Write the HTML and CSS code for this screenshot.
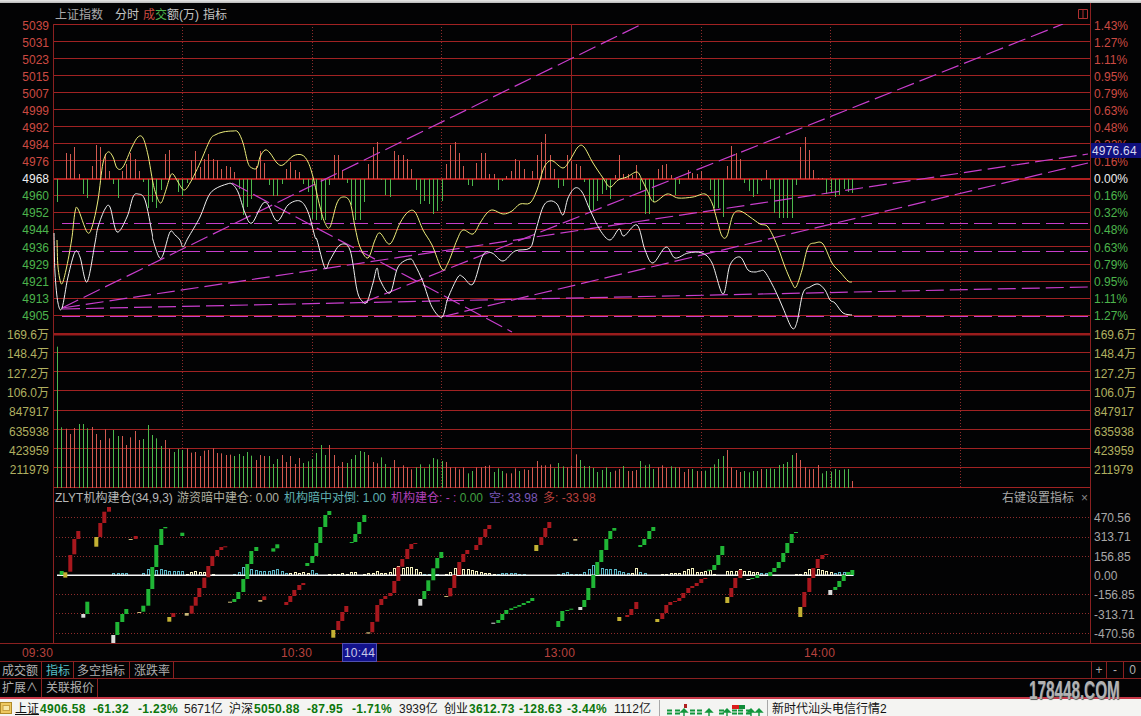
FILE: index.html
```html
<!DOCTYPE html>
<html lang="zh">
<head>
<meta charset="utf-8">
<title>上证指数 分时</title>
<link rel="stylesheet" href="styles.css">
</head>
<body>
<div class="screen">
  <div class="topstrip"></div>
  <div class="main">
    <div class="axis axis-left">
      <div class="ticks ticks-price">
        <span class="up">5039</span><span class="up">5031</span><span class="up">5023</span><span class="up">5015</span><span class="up">5007</span><span class="up">4999</span><span class="up">4992</span><span class="up">4984</span><span class="up">4976</span><span class="flat">4968</span><span class="down">4960</span><span class="down">4952</span><span class="down">4944</span><span class="down">4936</span><span class="down">4929</span><span class="down">4921</span><span class="down">4913</span><span class="down">4905</span>
      </div>
      <div class="ticks ticks-vol">
        <span>169.6万</span><span>148.4万</span><span>127.2万</span><span>106.0万</span><span>847917</span><span>635938</span><span>423959</span><span>211979</span>
      </div>
    </div>
    <div class="plot">
      <div class="plot-head">
        <span class="head-name">上证指数</span>
        <span class="head-item">分时</span>
        <span class="head-item"><i class="up">成</i><i class="down">交</i>额(万)</span>
        <span class="head-item">指标</span>
        <svg class="head-icon" width="10" height="10" viewBox="0 0 10 10"><path d="M.5.5h9v9h-9zM5 .5v9" fill="none" stroke="#b03030"/></svg>
      </div>
      <svg id="pane-price" class="pane pane-price" viewBox="53 24 1038 309" width="1038" height="309"></svg>
      <svg id="pane-vol" class="pane pane-vol" viewBox="53 333 1038 155" width="1038" height="155"></svg>
      <div class="ind">
        <svg id="pane-ind" class="pane pane-ind" viewBox="53 488 1038 155" width="1038" height="155"></svg>
        <div class="legend">
          <span class="leg leg-a">ZLYT机构建仓(34,9,3)</span>
          <span class="leg leg-b">游资暗中建仓: 0.00</span>
          <span class="leg leg-c">机构暗中对倒: 1.00</span>
          <span class="leg leg-d">机构建仓: - : <i class="leg-green">0.00</i></span>
          <span class="leg leg-e">空: 33.98</span>
          <span class="leg leg-f">多: -33.98</span>
          <span class="leg-right">右键设置指标<i class="leg-x">×</i></span>
        </div>
      </div>
    </div>
    <div class="axis axis-right">
      <div class="ticks ticks-price">
        <span class="up">1.43%</span><span class="up">1.27%</span><span class="up">1.11%</span><span class="up">0.95%</span><span class="up">0.79%</span><span class="up">0.63%</span><span class="up">0.48%</span><span class="up">0.32%</span><span class="up">0.16%</span><span class="flat">0.00%</span><span class="down">0.16%</span><span class="down">0.32%</span><span class="down">0.48%</span><span class="down">0.63%</span><span class="down">0.79%</span><span class="down">0.95%</span><span class="down">1.11%</span><span class="down">1.27%</span>
      </div>
      <div class="ticks ticks-vol">
        <span>169.6万</span><span>148.4万</span><span>127.2万</span><span>106.0万</span><span>847917</span><span>635938</span><span>423959</span><span>211979</span>
      </div>
      <div class="ticks ticks-ind">
        <span>470.56</span><span>313.71</span><span>156.85</span><span>0.00</span><span>-156.85</span><span>-313.71</span><span>-470.56</span>
      </div>
      <div class="last-price">4976.64</div>
    </div>
  </div>
  <div class="timebar">
    <span>09:30</span><span>10:30</span><span class="time-cur">10:44</span><span>13:00</span><span>14:00</span>
  </div>
  <div class="tabrow tabrow-a">
    <span class="tab tab-1">成交额</span>
    <span class="tab tab-2 tab-on">指标</span>
    <span class="tab tab-3">多空指标</span>
    <span class="tab tab-4">涨跌率</span>
    <div class="zoomer">
      <span class="zoom-btn zoom-1">+</span><span class="zoom-btn zoom-2">-</span><span class="zoom-btn zoom-3">0</span>
    </div>
  </div>
  <div class="tabrow tabrow-b">
    <span class="tab tab-1">扩展∧</span>
    <span class="tab tab-5">关联报价</span>
  </div>
  <div class="status">
    <svg class="st-icon" width="13" height="13" viewBox="0 0 13 13"><rect x=".5" y=".5" width="11" height="11" fill="#eec860" stroke="#b08a28"/><rect x="3" y="3.5" width="6.5" height="5" fill="#f8e8a8" stroke="#c8a040"/></svg>
    <span class="st-name st-link">上证</span><b class="st-num">4906.58</b><b class="st-num">-61.32</b><b class="st-num">-1.23%</b><span>5671亿</span>
    <span class="st-name">沪深</span><b class="st-num">5050.88</b><b class="st-num">-87.95</b><b class="st-num">-1.71%</b><span>3939亿</span>
    <span class="st-name">创业</span><b class="st-num">3612.73</b><b class="st-num">-128.63</b><b class="st-num">-3.44%</b><span>1112亿</span>
    <i class="st-sep"></i>
    <svg id="mini" class="st-mini" viewBox="660 697 107 19" width="107" height="19"></svg>
    <i class="st-sep"></i>
    <span class="st-news">新时代汕头电信行情2</span>
  </div>
  <div class="watermark">178448.COM</div>
</div>
<script src="chart.js"></script>
</body>
</html>
```
FILE: styles.css
```css
* { box-sizing: border-box; }
html, body { margin: 0; padding: 0; background: #000; }
body { font: 12px/1 "Liberation Sans", "Noto Sans CJK SC", sans-serif; color: #bbb; }
i { font-style: normal; }
.screen { position: relative; width: 1141px; height: 716px; overflow: hidden; background: #030304; }
.topstrip { height: 3px; background: linear-gradient(#e8e8e8, #b8b8b8); }
.main { display: flex; height: 640px; }
.axis { position: relative; flex: none; }
.axis-left { width: 53px; }
.axis-right { width: 50px; }
.ticks { display: grid; }
.ticks span { display: flex; align-items: center; white-space: nowrap; }
.ticks-price { grid-auto-rows: 17.09px; padding-top: 14px; }
.ticks-vol { grid-auto-rows: 19.3px; margin-top: 1px; color: #b0b060; }
.ticks-ind { grid-auto-rows: 19.35px; margin-top: 28.6px; color: #a8a8a8; }
.axis-left .ticks span { justify-content: flex-end; padding-right: 4px; }
.axis-right .ticks span { padding-left: 3px; }
.up { color: #cc4a42; }
.down { color: #4cb44c; }
.flat { color: #eee; }
.plot { width: 1038px; flex: none; display: flex; flex-direction: column; }
.plot-head { height: 21px; display: flex; align-items: center; padding: 2px 0 0 2px; border-right: 1px solid #8a2020; color: #c4c4c4; }
.head-name { margin-right: 12px; color: #aaa; }
.head-item { margin-right: 4px; }
.head-icon { margin-left: auto; margin-right: 2px; margin-top: -2px; }
.pane { display: block; flex: none; }
.ind { position: relative; height: 155px; }
.legend { position: absolute; inset: 0 0 auto 0; height: 19px; display: grid; grid-template-columns: 122px 107px 107px 98px 54px 1fr 89px; align-items: center; padding: 1px 0 0 2px; }
.leg { white-space: nowrap; }
.leg-a { color: #b8b8b8; }
.leg-b { color: #b0b0a0; }
.leg-c { color: #5fb0b0; }
.leg-d { color: #b040b8; }
.leg-green { color: #40a040; }
.leg-e { color: #7a58b8; }
.leg-f { color: #b8403c; }
.leg-right { color: #a8a8a8; white-space: nowrap; }
.leg-x { margin-left: 7px; color: #888; }
.timebar { display: grid; grid-template-columns: 259px 62px 201px 260px 1fr; align-items: center; height: 19px; padding-left: 22px; border-top: 1px solid #8a2020; border-bottom: 1px solid #8a2020; color: #b8423e; letter-spacing: .2px; }
.time-cur { width: 33px; height: 17px; display: flex; align-items: center; justify-content: center; background: #12128c; color: #c8c8e8; outline: 1px solid #5050b0; }
.tabrow { display: flex; align-items: stretch; }
.tabrow-a { height: 17px; border-bottom: 1px solid #8a2020; }
.tabrow-b { height: 18px; }
.tab { display: flex; align-items: center; padding: 1px 0 0 2px; border-right: 1px solid #8a2020; color: #b0b0b0; white-space: nowrap; }
.tabrow-b .tab { padding-top: 0; }
.tab-1 { width: 42px; }
.tab-2 { width: 32px; padding-left: 4px; }
.tab-3 { width: 56px; padding-left: 3px; }
.tab-4 { width: 44px; padding-left: 4px; }
.tab-5 { width: 56px; padding-left: 4px; }
.tab-on { color: #58c0c8; }
.zoomer { margin-left: auto; width: 50px; display: flex; border-left: 1px solid #8a2020; }
.zoom-btn { display: flex; align-items: center; justify-content: center; border-right: 1px solid #8a2020; color: #b0b0b0; }
.zoom-1 { width: 15px; }
.zoom-2 { width: 17px; }
.zoom-3 { flex: 1; border-right: 0; }
.status { display: grid; grid-template-columns: 15px 25px 53px 45px 46px 45px 25px 53px 45px 47px 45px 25px 50px 48px 47px 45px 1px 107px 1px 1fr; align-items: center; height: 20px; border-top: 2px solid #c83848; background: #f4f4f2; color: #1a1a1a; white-space: nowrap; }
.st-icon { margin-left: 0; }
.st-name { color: #111; }
.st-link { text-decoration: underline; }
.st-num { color: #0c760c; letter-spacing: .35px; }
.st-sep { height: 18px; width: 1px; background: #a8a8a8; }
.st-mini { display: block; }
.st-news { padding-left: 4px; color: #111; }
.last-price { position: absolute; left: 0; top: 140px; width: 50px; height: 15px; display: flex; align-items: center; padding-left: 1px; background: #10107e; color: #d8d8f0; letter-spacing: .2px; }
.watermark { position: absolute; left: 1029px; top: 678px; font: bold 25px/25px "Liberation Sans", sans-serif; color: #b2b2b2; text-shadow: 1px 1px 1px #555; white-space: nowrap; transform: scaleX(.61); transform-origin: left top; }
```
FILE: chart.js
```js
(function () {
  var NS = 'http://www.w3.org/2000/svg';
  function add(parent, tag, attrs) {
    var el = document.createElementNS(NS, tag);
    for (var k in attrs) el.setAttribute(k, attrs[k]);
    parent.appendChild(el);
    return el;
  }
  function X(n) { return Math.round(57 + 4.322 * n) + 0.5; }
  var GRID = '#a02222', DOT = '#8e2c2c', RED = '#d25a50', GREEN = '#4cb84c', MAG = '#c83ecc';

  var price = document.getElementById('pane-price');
  var vol = document.getElementById('pane-vol');
  var ind = document.getElementById('pane-ind');

  function hline(p, y, w, c, dash, x1, x2) {
    var a = { x1: x1 || 53, x2: x2 || 1091, y1: y, y2: y, stroke: c || GRID, 'stroke-width': w || 1 };
    if (dash) a['stroke-dasharray'] = dash;
    add(p, 'line', a);
  }
  function vline(p, x, y1, y2, c, dash, w) {
    var a = { x1: x, x2: x, y1: y1, y2: y2, stroke: c, 'stroke-width': w || 1 };
    if (dash) a['stroke-dasharray'] = dash;
    add(p, 'line', a);
  }

  /* grid */
  [24.5, 41.5, 58.5, 75.5, 92.5, 109.5, 126.5, 143.5, 160.5, 195.5, 212.5, 229.5, 246.5, 264.5, 281.5, 298.5, 315.5].forEach(function (y) { hline(price, y, 1.2); });
  hline(price, 179, 2, '#b01e1e');
  [352.5, 371.5, 390.5, 410.5, 429.5, 448.5, 467.5, 487.5].forEach(function (y) { hline(vol, y, 1.2); });
  hline(vol, 334, 3, '#9a1c1c');
  [517.5, 537.5, 556.5, 594.5, 613.5, 633.5].forEach(function (y) { hline(ind, y, 1, DOT, '1 2'); });
  [182.5, 312.5, 441.5, 701.5, 830.5, 960.5].forEach(function (x) {
    vline(price, x, 24, 333, DOT, '1 2');
    vline(vol, x, 333, 488, DOT, '1 2');
  });
  vline(price, 571.5, 24, 333, '#962222');
  vline(vol, 571.5, 333, 488, '#962222');
  [price, vol, ind].forEach(function (p, i) {
    var ys = [[24, 333], [333, 488], [488, 643]][i];
    vline(p, 53.5, ys[0], ys[1], '#8a2020');
    vline(p, 1090.5, ys[0], ys[1], '#8a2020');
  });

  /* price pane bars: signed height, + red up, - green down */
  var bars = [-23,0,26,25,32,5,-15,-19,13,34,32,25,8,-5,-19,8,15,26,20,8,-3,-29,-23,-29,-11,25,29,0,-13,-17,-4,19,28,12,20,25,20,19,10,13,12,7,-10,-36,-28,-20,13,28,16,-6,-17,-17,-5,10,17,9,7,-5,-13,-40,-41,-41,-41,-6,24,24,9,-4,-26,-41,-41,-23,15,32,37,
    -1,-16,-18,28,24,24,20,10,-11,-25,-22,-25,-35,-32,-22,15,34,37,26,13,-6,-7,16,26,26,5,5,-11,-2,3,8,20,18,10,0,8,24,37,45,24,10,-9,-7,24,18,15,13,-3,-31,-31,-22,-15,-11,-20,4,24,5,5,4,14,-11,-35,-35,-23,10,14,15,4,-16,-5,0,9,6,5,8,0,-11,-29,-29,-38,13,33,26,20,-4,-12,-18,-15,-2,9,-10,-34,-39,-39,-39,-39,-6,32,42,29,9,1,1,-15,-13,-18,-16,-10,-13,-14];
  bars.forEach(function (h, n) {
    if (!h) return;
    var x = X(n);
    vline(price, x, 179, 179 - h, h > 0 ? RED : GREEN);
  });

  /* fan of dashed trend lines */
  [[62, 223.5, 1089, 223.5], [62, 251.5, 1089, 251.5], [62, 316.5, 1089, 316.5],
   [62, 308, 642, 24], [62, 308, 1088, 154], [62, 309, 1088, 287],
   [362, 303, 1063, 24], [441, 317, 1088, 163], [232, 183, 512, 332]].forEach(function (l) {
    add(price, 'line', { x1: l[0], y1: l[1], x2: l[2], y2: l[3], stroke: MAG, 'stroke-width': 1.2, 'stroke-dasharray': '18 6' });
  });

  /* smooth curves */
  function smooth(pts) {
    var d = 'M' + pts[0][0] + ' ' + pts[0][1];
    for (var i = 0; i < pts.length - 1; i++) {
      var p0 = pts[i - 1] || pts[i], p1 = pts[i], p2 = pts[i + 1], p3 = pts[i + 2] || p2;
      d += 'C' + (p1[0] + (p2[0] - p0[0]) / 6).toFixed(1) + ' ' + (p1[1] + (p2[1] - p0[1]) / 6).toFixed(1) + ' ' +
        (p2[0] - (p3[0] - p1[0]) / 6).toFixed(1) + ' ' + (p2[1] - (p3[1] - p1[1]) / 6).toFixed(1) + ' ' + p2[0] + ' ' + p2[1];
    }
    return d;
  }
  var yellow = [[57,240],[58,267],[61.5,284],[66,270],[71.6,240],[75,212],[78,209],[87,232],[92,227],[98,200],[103,163],[108,152],[113,157],[117,168],[123,167],[132,147],[138,137],[143,138],[148,155],[153,183],[157,197],[161,203],[165,193],[170,177],[173,174],[178,182],[184,190],[190,183],[200,163],[210,140],[215,135],[223,132],[233,131],[238,132],[243,143],[248,163],[252,168],[257,168],[260,157],[265,150],[270,153],[277,163],[283,165],[293,156],[302,155],[308,162],[313,177],[320,207],[325,223],[330,227],[337,203],[343,197],[350,202],[355,227],[360,247],[368,258],[375,240],[380,233],[390,244],[400,223],[408,212],[415,212],[423,230],[432,245],[442,269],[448,263],[457,240],[463,230],[473,234],[480,223],[487,213],[493,210],[503,214],[512,211],[520,204],[530,203],[537,190],[543,170],[548,162],[553,161],[563,168],[570,160],[578,147],[584,147],[593,163],[603,178],[610,187],[618,180],[627,177],[637,172],[642,180],[647,190],[654,202],[667,194],[678,198],[693,197],[705,194],[712,203],[717,220],[722,236],[727,236],[733,215],[740,211],[750,217],[760,224],[768,227],[777,245],[785,267],[792,283],[796,287],[802,270],[808,247],[815,243],[823,244],[832,263],[840,272],[848,281],[852,282]];
  var white = [[54,233],[55,273],[58,303],[62,308],[68,277],[75,252],[80,257],[87,282],[95,243],[98,227],[105,209],[110,207],[117,232],[127,217],[133,197],[138,194],[145,200],[152,233],[153,240],[159,257],[163,255],[170,232],[175,235],[180,240],[183,247],[188,238],[200,217],[208,197],[215,189],[227,184],[232,184],[238,192],[245,213],[252,223],[265,202],[277,221],[288,205],[300,201],[308,212],[315,237],[317,240],[325,268],[330,260],[340,245],[350,250],[357,290],[362,301],[367,302],[373,283],[377,268],[380,280],[390,293],[398,267],[410,259],[415,265],[423,282],[432,307],[442,317],[448,298],[458,277],[463,277],[473,284],[483,255],[492,253],[503,261],[515,251],[530,248],[535,233],[543,207],[550,201],[557,204],[563,215],[568,198],[575,188],[582,192],[590,210],[600,230],[610,240],[619,229],[624,236],[637,225],[645,250],[653,263],[666,247],[675,258],[688,253],[702,253],[712,263],[723,294],[730,265],[740,257],[748,270],[755,272],[760,271],[765,272],[775,290],[783,308],[792,328],[797,322],[803,293],[810,287],[818,284],[825,290],[830,300],[835,303],[843,313],[852,315]];
  add(price, 'path', { d: smooth(yellow), fill: 'none', stroke: '#eeee7c', 'stroke-width': 1 });
  add(price, 'path', { d: smooth(white), fill: 'none', stroke: '#f0f0f0', 'stroke-width': 1 });

  /* volume bars: signed value, + red, - green; zoomed top coordinate */
  var volA = [-320,-562,566,582,564,-552,-552,-565,561,582,600,568,595,-570,-588,588,615,592,573,600,-597,-555,-585,-595,-618,600,626,-636,-627,-630,625,638,636,648,632,630,625,639,640,645,644,-648,-642,-648,-636,-647,660,645,648,-648,-672,-657,645,666,648,672,654,-669,-664,-657,-639,-615,-645,615,645,678,666,-669,-657,-645,-633,-636,645,666,670];
  var volB = [-352,-372,-382,360,382,376,382,388,-382,-373,-385,-373,-354,-358,-363,366,382,382,388,382,-400,-393,382,382,378,376,-396,-385,-393,400,400,385,-393,388,390,382,363,376,376,373,-385,-369,-379,382,378,343,-360,-378,-378,-384,-396,-390,-382,-396,392,387,-378,393,393,390,-363,-376,-373,-387,382,376,384,-379,-382,382,396,387,-387,393,393,-392,-382,-373,-357,-348,330,382,390,396,-393,-397,-393,-393,387,-387,-385,-387,-375,-372,-366,-345,339,360,381,388,387,375,-400,-393,-395,-387,-390,-388,-387,423];
  volA.forEach(function (v, n) {
    vline(vol, X(n), 488, 240 + Math.abs(v) / 3, v > 0 ? RED : GREEN);
  });
  volB.forEach(function (v, i) {
    vline(vol, X(i + 75), 488, 340 + Math.abs(v) / 3, v > 0 ? RED : GREEN);
  });

  /* small histogram around the zero line: + pale yellow, - cyan */
  var hist = [0,0,0,0,0,0,0,0,0,0,0,0,0,-2,-2,-2,-2,0,0,0,-2,-6,-5,-5,-6,-5,-4,-4,-4,-4,1,3,4,3,3,2,1,0,0,0,0,-1,-3,-8,-10,-6,-5,-4,-4,-4,-5,-6,-4,-2,2,3,2,3,2,-5,-2,0,0,1,1,1,2,1,3,3,0,1,2,2,4,2,2,3,7,9,7,8,8,6,3,-1,-1,-1,-1,0,1,3,7,3,6,6,5,4,3,2,2,1,-1,-2,-2,-2,-2,-1,-1,0,0,0,0,0,0,0,-1,-2,-3,-1,-1,-1,-3,-6,-10,-6,-7,-6,-6,-6,-4,-3,-2,2,7,-3,-2,0,0,0,1,1,2,2,2,4,6,7,3,3,4,5,1,0,0,4,4,4,6,4,4,3,3,-2,-2,-1,0,0,0,0,0,1,1,3,6,5,6,5,4,3,-2,-3,-3,-3,-5];
  hist.forEach(function (h, n) {
    if (!h) return;
    add(ind, 'rect', { x: X(n) - 1, y: 575 - Math.abs(h) + 0.5, width: 2, height: Math.abs(h), fill: 'none', stroke: h > 0 ? '#f6f2c0' : '#58b4c4', 'stroke-width': 1 });
  });
  add(ind, 'rect', { x: 57, y: 574.5, width: 796, height: 1.5, fill: '#f8f8f8' });

  /* candle blocks: colour + zoomed x, top, bottom */
  var COL = { r: '#a8181e', g: '#20b636', y: '#c4b234', w: '#dcdcdc', t: '#c8b878' };
  function blocks(x0, s) {
    s.split(' ').forEach(function (b) {
      var c = COL[b[0]], v = b.slice(1).split(',');
      var x = x0 + v[0] / 3, y1 = 485 + v[1] / 3, y2 = 485 + v[2] / 3;
      add(ind, 'rect', { x: (x - 2).toFixed(1), y: y1.toFixed(1), width: 4, height: Math.max(y2 - y1, 1).toFixed(1), fill: c });
    });
  }
  blocks(0, 'g185,258,270 y196,262,278 r211,210,260 r223,162,208 r235,138,162 y289,156,185 r301,114,156 r313,80,114 r327,66,80 t392,162,165 r407,153,162 g262,350,387 w250,387,398 w340,450,475 g352,411,450 g367,387,411 g379,372,387 t418,381,384 g430,362,380 g445,312,362 g457,246,312 g469,180,246 g484,132,180 g496,126,130 g547,143,153 y508,396,410 r520,384,396 t560,384,392 r575,362,386 r587,336,362 r598,309,336 r613,278,309 r625,243,277 r637,213,243 r652,195,213 r664,186,195 r676,184,186 t690,350,353 g703,342,351 g715,321,342 g730,282,321 g742,237,282 g754,198,237 g769,186,198 g820,190,200 g832,178,190 t781,345,350 r793,334,345 r859,351,360 r871,333,351 r883,315,333 r898,300,315 r910,294,300 g922,234,243 g937,213,234 g949,174,213 g961,126,174 g976,90,126 g988,78,90 g1055,171,174 g1066,147,171 g1078,111,147 g1093,90,111 y1000,435,458 r1015,408,435 r1027,381,408 r1039,363,381 t1105,442,446 r1117,411,442 r1132,360,410');
  blocks(380, 'r4,342,360 r16,333,342 r31,324,333 r43,288,324 r55,245,288 r67,222,245 r82,192,222 r94,177,192 r106,174,177 w121,342,362 g133,318,342 g145,286,318 g160,250,286 g172,219,250 g184,201,219 t199,333,336 r211,309,334 r223,270,309 r238,231,270 r250,207,231 r262,195,207 r289,180,195 r301,156,180 r316,132,156 r328,120,132 y469,180,198 r484,156,180 r496,129,156 r508,111,129 t586,162,167 w340,413,416 g355,405,414 g367,387,405 g379,375,387 g394,370,375 g406,365,369 g418,360,365 g431,354,360 g445,348,354 g457,339,348 g535,408,426 g547,378,408 g562,375,378 g574,371,374 w601,366,375 g613,345,366 g625,309,345 g640,270,309 g652,231,270 g664,195,231 g679,162,195 g691,138,162 g703,129,137 g781,180,186 g793,162,180 g808,138,162 g820,126,138 y718,396,408 r742,390,396 r754,372,390 r769,351,372 y832,402,411 r847,384,402 r859,360,384 r871,351,360 r885,348,351 r898,339,348 r910,324,339 r925,309,324 r937,303,309 r950,294,303 r964,282,294 r976,279,282 g988,254,257 g1003,240,255 g1015,210,240 g1027,183,210 y1042,336,354 r1054,309,336 r1066,279,309 r1081,255,279 w1105,282,285 g1117,279,282 g1132,270,279');
  blocks(760, 'g31,261,273 g43,249,261 g56,231,249 g70,204,231 g82,174,204 g95,147,174 g108,141,144 y121,366,396 r133,321,366 r148,279,321 r160,249,279 r173,222,249 r187,210,222 r199,207,210 w211,315,330 g226,306,315 g238,288,306 g251,270,288 g264,261,270 g277,255,270');

  /* small breadth indicator in the status bar */
  var mini = document.getElementById('mini');
  [667, 675, 690, 697, 719, 732, 738, 746].forEach(function (x) {
    add(mini, 'path', { d: 'M' + x + ' 708.5h5M' + x + ' 711.5h5', stroke: '#12963c', 'stroke-width': 2, fill: 'none' });
  });
  [684, 709, 727, 751, 759].forEach(function (x) {
    add(mini, 'path', { d: 'M' + (x - 3) + ' 710l3-3 3 3zM' + x + ' 708v6', stroke: '#12963c', 'stroke-width': 1.4, fill: '#12963c' });
  });
  add(mini, 'rect', { x: 684, y: 702, width: 3, height: 4, fill: '#b02020' });
  add(mini, 'rect', { x: 732, y: 703, width: 7, height: 4, fill: '#dc1c1c' });
  add(mini, 'rect', { x: 739, y: 703, width: 6, height: 4, fill: '#108c38' });
})();
```
